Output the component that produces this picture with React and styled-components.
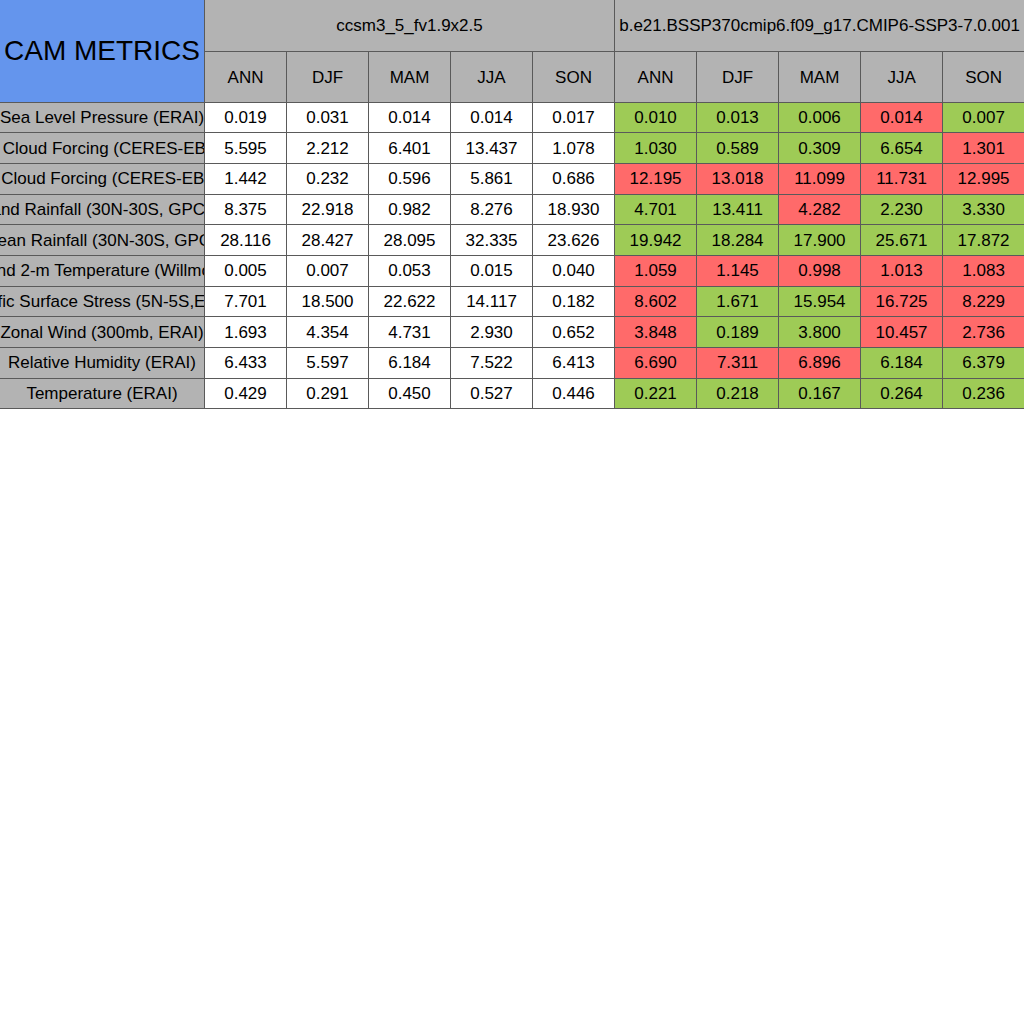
import styled, { createGlobalStyle } from "styled-components";

const GlobalStyle = createGlobalStyle`
  html, body {
    margin: 0;
    padding: 0;
    background: #ffffff;
  }
  body {
    font-family: "Liberation Sans", Arial, sans-serif;
    color: #000000;
  }
`;

const colors = {
  header: "#b3b3b3",
  title: "#6495ed",
  better: "#9ecb56",
  worse: "#ff6a6a",
  line: "#5a5a5a",
};

const seasons = ["ANN", "DJF", "MAM", "JJA", "SON"];

const metrics = [
  {
    name: "Sea Level Pressure (ERAI)",
    base: ["0.019", "0.031", "0.014", "0.014", "0.017"],
    test: ["0.010", "0.013", "0.006", "0.014", "0.007"],
  },
  {
    name: "SW Cloud Forcing (CERES-EBAF)",
    base: ["5.595", "2.212", "6.401", "13.437", "1.078"],
    test: ["1.030", "0.589", "0.309", "6.654", "1.301"],
  },
  {
    name: "LW Cloud Forcing (CERES-EBAF)",
    base: ["1.442", "0.232", "0.596", "5.861", "0.686"],
    test: ["12.195", "13.018", "11.099", "11.731", "12.995"],
  },
  {
    name: "Land Rainfall (30N-30S, GPCP)",
    base: ["8.375", "22.918", "0.982", "8.276", "18.930"],
    test: ["4.701", "13.411", "4.282", "2.230", "3.330"],
  },
  {
    name: "Ocean Rainfall (30N-30S, GPCP)",
    base: ["28.116", "28.427", "28.095", "32.335", "23.626"],
    test: ["19.942", "18.284", "17.900", "25.671", "17.872"],
  },
  {
    name: "Land 2-m Temperature (Willmott)",
    base: ["0.005", "0.007", "0.053", "0.015", "0.040"],
    test: ["1.059", "1.145", "0.998", "1.013", "1.083"],
  },
  {
    name: "Pacific Surface Stress (5N-5S,ERAI)",
    base: ["7.701", "18.500", "22.622", "14.117", "0.182"],
    test: ["8.602", "1.671", "15.954", "16.725", "8.229"],
  },
  {
    name: "Zonal Wind (300mb, ERAI)",
    base: ["1.693", "4.354", "4.731", "2.930", "0.652"],
    test: ["3.848", "0.189", "3.800", "10.457", "2.736"],
  },
  {
    name: "Relative Humidity (ERAI)",
    base: ["6.433", "5.597", "6.184", "7.522", "6.413"],
    test: ["6.690", "7.311", "6.896", "6.184", "6.379"],
  },
  {
    name: "Temperature (ERAI)",
    base: ["0.429", "0.291", "0.450", "0.527", "0.446"],
    test: ["0.221", "0.218", "0.167", "0.264", "0.236"],
  },
];

const Page = styled.div`
  width: 1024px;
  overflow: hidden;
`;

const Table = styled.table`
  border-collapse: collapse;
  table-layout: fixed;
  width: 1025px;
  margin-left: -1px;
  font-size: 17px;
`;

const LabelCol = styled.col`
  width: 205px;
`;

const ValueCol = styled.col`
  width: 82px;
`;

const HeadRow = styled.tr`
  height: 51px;
`;

const DataRow = styled.tr`
  height: 30.7px;
`;

const Cell = styled.td`
  border: 1px solid ${colors.line};
  padding: 1px 0 0;
  text-align: center;
  vertical-align: middle;
  white-space: nowrap;
  overflow: hidden;
  background: ${({ $tone }) =>
    $tone === "better"
      ? colors.better
      : $tone === "worse"
      ? colors.worse
      : "#ffffff"};
`;

const TitleCell = styled.th`
  border: 1px solid ${colors.line};
  border-top: none;
  padding: 0;
  background: ${colors.title};
  font-weight: 400;
  font-size: 28px;
  text-align: center;
  white-space: nowrap;
  overflow: hidden;
`;

const CaseCell = styled.th`
  border: 1px solid ${colors.line};
  border-top: none;
  padding: 2px 0 0;
  background: ${colors.header};
  font-weight: 400;
  text-align: center;
  white-space: nowrap;
  overflow: hidden;
`;

const SeasonCell = styled.th`
  border: 1px solid ${colors.line};
  padding: 2px 0 0;
  background: ${colors.header};
  font-weight: 400;
  text-align: center;
`;

const LabelCell = styled.th`
  border: 1px solid ${colors.line};
  padding: 1px 0 0;
  background: ${colors.header};
  font-weight: 400;
`;

const LabelText = styled.div`
  display: flex;
  justify-content: center;
  width: 204px;
  overflow: hidden;
  white-space: nowrap;
`;

const App = () => {
  return (
    <Page>
      <GlobalStyle />
      <Table>
        <colgroup>
          <LabelCol />
          {Array.from({ length: 10 }).map((_, i) => (
            <ValueCol key={i} />
          ))}
        </colgroup>
        <thead>
          <HeadRow>
            <TitleCell rowSpan={2}>CAM METRICS</TitleCell>
            <CaseCell colSpan={5}>ccsm3_5_fv1.9x2.5</CaseCell>
            <CaseCell colSpan={5}>
              b.e21.BSSP370cmip6.f09_g17.CMIP6-SSP3-7.0.001
            </CaseCell>
          </HeadRow>
          <HeadRow>
            {[...seasons, ...seasons].map((s, i) => (
              <SeasonCell key={i}>{s}</SeasonCell>
            ))}
          </HeadRow>
        </thead>
        <tbody>
          {metrics.map((m) => (
            <DataRow key={m.name}>
              <LabelCell>
                <LabelText>
                  <span>{m.name}</span>
                </LabelText>
              </LabelCell>
              {m.base.map((v, i) => (
                <Cell key={"b" + i}>{v}</Cell>
              ))}
              {m.test.map((v, i) => (
                <Cell
                  key={"t" + i}
                  $tone={
                    parseFloat(v) < parseFloat(m.base[i]) ? "better" : "worse"
                  }
                >
                  {v}
                </Cell>
              ))}
            </DataRow>
          ))}
        </tbody>
      </Table>
    </Page>
  );
};

export default App;
